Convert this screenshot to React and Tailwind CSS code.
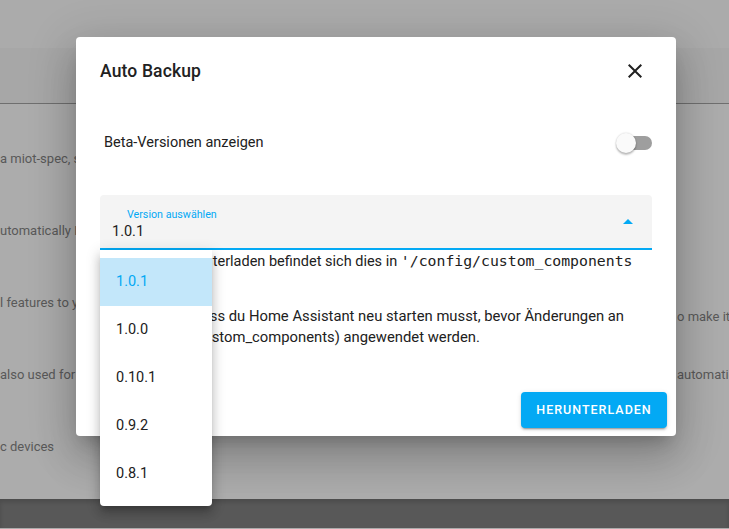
import React from "react";

// background page rows, only the parts that peek out beside the dialog
const rows = [
  { left: "a miot-spec, s", right: "" },
  { left: "utomatically R", right: "" },
  { left: "l features to y", right: "o make it s", rightOffset: true },
  { left: "also used for g", right: "automatio" },
  { left: "c devices", right: "" },
];

const versions = ["1.0.1", "1.0.0", "0.10.1", "0.9.2", "0.8.1"];

function CloseIcon() {
  return (
    <svg viewBox="0 0 24 24" className="w-6 h-6" fill="#212121">
      <path d="M19,6.41L17.59,5L12,10.59L6.41,5L5,6.41L10.59,12L5,17.59L6.41,19L12,13.41L17.59,19L19,17.59L13.41,12L19,6.41Z" />
    </svg>
  );
}

export default function App() {
  return (
    <div className="relative w-[729px] h-[529px] overflow-hidden bg-[#acacac] font-['Roboto',sans-serif]">
      {/* page behind the overlay */}
      <div className="h-12 bg-[#ababab]" />
      <div className="h-[56px] bg-[#a7a7a7] border-b border-[#6f6f6f]" />
      <div className="pt-[19px] h-[395px]">
        {rows.map((r, i) => (
          <div key={i} className="h-[72px] flex items-center justify-between text-[13px] text-[#595959]">
            <div className="w-[90px] whitespace-nowrap">{r.left}</div>
            <div className={`w-[53px] whitespace-nowrap pl-px ${r.rightOffset ? "mt-[28px]" : ""}`}>
              {r.right}
            </div>
          </div>
        ))}
      </div>
      <div className="h-[29px] bg-[#585858] shadow-[inset_0_3px_4px_rgba(0,0,0,0.15)]" />

      {/* dialog */}
      <div className="absolute left-[76px] top-[37px] w-[600px] h-[399px] bg-white rounded-[4px] shadow-[0_11px_15px_-7px_rgba(0,0,0,0.2),0_24px_38px_3px_rgba(0,0,0,0.14),0_9px_46px_8px_rgba(0,0,0,0.12)] flex flex-col">
        <div className="h-[68px] flex items-center justify-between pl-6 pr-[29px]">
          <h2 className="text-[17.5px] font-medium text-[#212121] tracking-[0.15px]">Auto Backup</h2>
          <CloseIcon />
        </div>

        <div className="flex-1 px-6">
          <div className="h-[76px] flex items-center justify-between pl-1">
            <span className="text-[14.5px] text-[#212121]">Beta-Versionen anzeigen</span>
            <div className="relative w-[36px] h-5 flex items-center justify-end">
              <div className="w-[34px] h-[14px] rounded-full bg-[#9e9e9e]" />
              <div className="absolute left-0 top-0 w-5 h-5 rounded-full bg-[#fafafa] shadow-[0_2px_2px_rgba(0,0,0,0.24),0_0_2px_rgba(0,0,0,0.2)]" />
            </div>
          </div>

          <div className="mt-[14px] h-[55px] bg-[#f4f4f4] rounded-t-[4px] border-b-2 border-[#03a9f4] flex items-center justify-between pr-[19px]">
            <div className="flex flex-col">
              <span className="pl-[27px] text-[10.7px] leading-[14px] text-[#03a9f4] mt-[6px]">Version auswählen</span>
              <span className="pl-3 text-[14.5px] leading-[20px] text-[#212121]">1.0.1</span>
            </div>
            <svg width="10" height="5" viewBox="0 0 10 5" className="-mt-[1px]">
              <path d="M0 5 L5 0 L10 5 Z" fill="#03a9f4" />
            </svg>
          </div>

          <p className="text-[14.5px] leading-[22px] text-[#212121] whitespace-nowrap">
            <span className="tracking-[0.3px]">Nach dem Herun</span>terladen befindet sich dies in{" "}
            <code className="font-['DejaVu_Sans_Mono',monospace] text-[14.8px]">'/config/custom_components</code>
          </p>
          <p className="mt-[33px] text-[14.8px] leading-[21px] text-[#212121]">
            Beachte bitte, dass du Home Assistant neu starten musst, bevor Änderungen an
            <br />
            Integrationen (custom_components) angewendet werden.
          </p>
        </div>

        <div className="flex justify-end pr-[9px] pb-2">
          <button className="h-9 w-[146px] rounded-[4px] bg-[#03a9f4] text-white text-[12.5px] font-medium tracking-[1px] uppercase shadow-[0_3px_1px_-2px_rgba(0,0,0,0.2),0_2px_2px_rgba(0,0,0,0.14),0_1px_5px_rgba(0,0,0,0.12)]">
            Herunterladen
          </button>
        </div>

        {/* dropdown menu */}
        <div className="absolute left-6 top-[213px] w-[112px] py-2 bg-white rounded-b-[4px] shadow-[0_5px_5px_-3px_rgba(0,0,0,0.2),0_8px_10px_1px_rgba(0,0,0,0.14),0_3px_14px_2px_rgba(0,0,0,0.12)]">
          {versions.map((v, i) => (
            <div
              key={v}
              className={`h-12 flex items-center pl-4 text-[14.5px] ${i === 0 ? "bg-[#c3e7fa] text-[#03a9f4]" : "text-[#212121]"}`}
            >
              {v}
            </div>
          ))}
        </div>
      </div>
    </div>
  );
}
